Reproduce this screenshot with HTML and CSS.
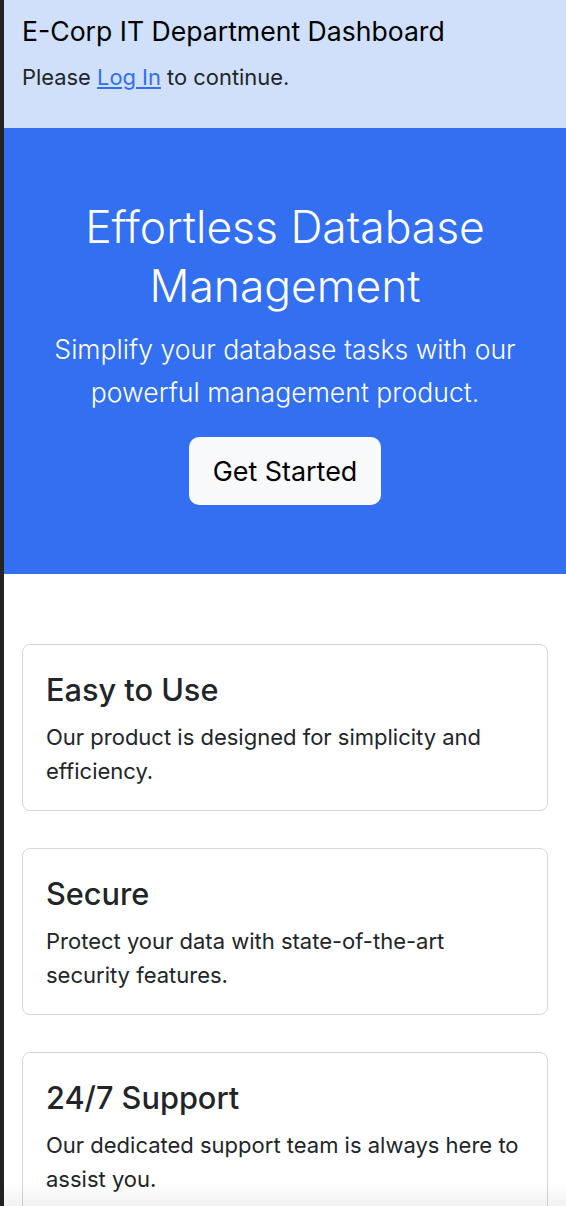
FILE: index.html
```html
<!DOCTYPE html>
<html lang="en">
<head>
<meta charset="utf-8">
<title>E-Corp IT Department Dashboard</title>
<link rel="stylesheet" href="styles.css">
</head>
<body>
<div class="page">
  <header class="topbar">
    <h1 class="topbar-title">E-Corp IT Department Dashboard</h1>
    <p class="topbar-text">Please <a href="#" class="link">Log In</a> to continue.</p>
  </header>
  <section class="hero">
    <h2 class="hero-title">Effortless Database Management</h2>
    <p class="hero-lead">Simplify your database tasks with our powerful management product.</p>
    <a href="#" class="hero-btn">Get Started</a>
  </section>
  <main class="features">
    <div class="card">
      <h3 class="card-title">Easy to Use</h3>
      <p class="card-text">Our product is designed for simplicity and efficiency.</p>
    </div>
    <div class="card">
      <h3 class="card-title">Secure</h3>
      <p class="card-text">Protect your data with state-of-the-art security features.</p>
    </div>
    <div class="card">
      <h3 class="card-title">24/7 Support</h3>
      <p class="card-text">Our dedicated support team is always here to assist you.</p>
    </div>
  </main>
  <div class="bottom-fade"></div>
</div>
</body>
</html>
```

FILE: styles.css
```css
* { box-sizing: border-box; }
html, body { margin: 0; padding: 0; }
body {
  font-family: Inter, "Noto Sans", sans-serif;
  color: #212529;
  background: #ffffff;
}
.page {
  border-left: 4px solid #232323;
  min-height: 100vh;
}
.topbar {
  background: #d0e0fa;
  padding: 14px 18px 0 18px;
  height: 128px;
}
.topbar-title {
  margin: 0;
  font-size: 26.6px;
  font-weight: 400;
  color: #000;
  line-height: 34px;
}
.topbar-text {
  margin: 14px 0 0 0;
  font-size: 21.9px;
  line-height: 30px;
}
.link { color: #2f6ff0; text-decoration: underline; }
.hero {
  background: #326ff1;
  color: #fff;
  text-align: center;
  padding: 70px 30px 0 30px;
  height: 446px;
}
.hero-title {
  margin: 0;
  font-size: 44.4px;
  font-weight: 300;
  line-height: 59px;
}
.hero-lead {
  margin: 12px 0 0 0;
  font-size: 26.6px;
  font-weight: 300;
  line-height: 43px;
}
.hero-btn {
  display: inline-block;
  margin-top: 23px;
  background: #f8f9fa;
  color: #000;
  text-decoration: none;
  font-size: 26.9px;
  line-height: 36px;
  padding: 16px 24px;
  border-radius: 10px;
}
.features {
  padding: 70px 18px 0 18px;
  display: flex;
  flex-direction: column;
  gap: 37px;
}
.card {
  border: 1px solid #d6d6d6;
  border-radius: 8px;
  padding: 27px 23px 22px 23px;
}
.card-title {
  margin: 0 0 12px 0;
  font-size: 30.7px;
  font-weight: 500;
  line-height: 36px;
}
.card-text {
  margin: 0;
  font-size: 22px;
  line-height: 34px;
}
.bottom-fade {
  position: fixed;
  left: 0;
  right: 0;
  bottom: 0;
  height: 24px;
  background: linear-gradient(to bottom, rgba(0,0,0,0), rgba(0,0,0,0.05));
  pointer-events: none;
}
```
